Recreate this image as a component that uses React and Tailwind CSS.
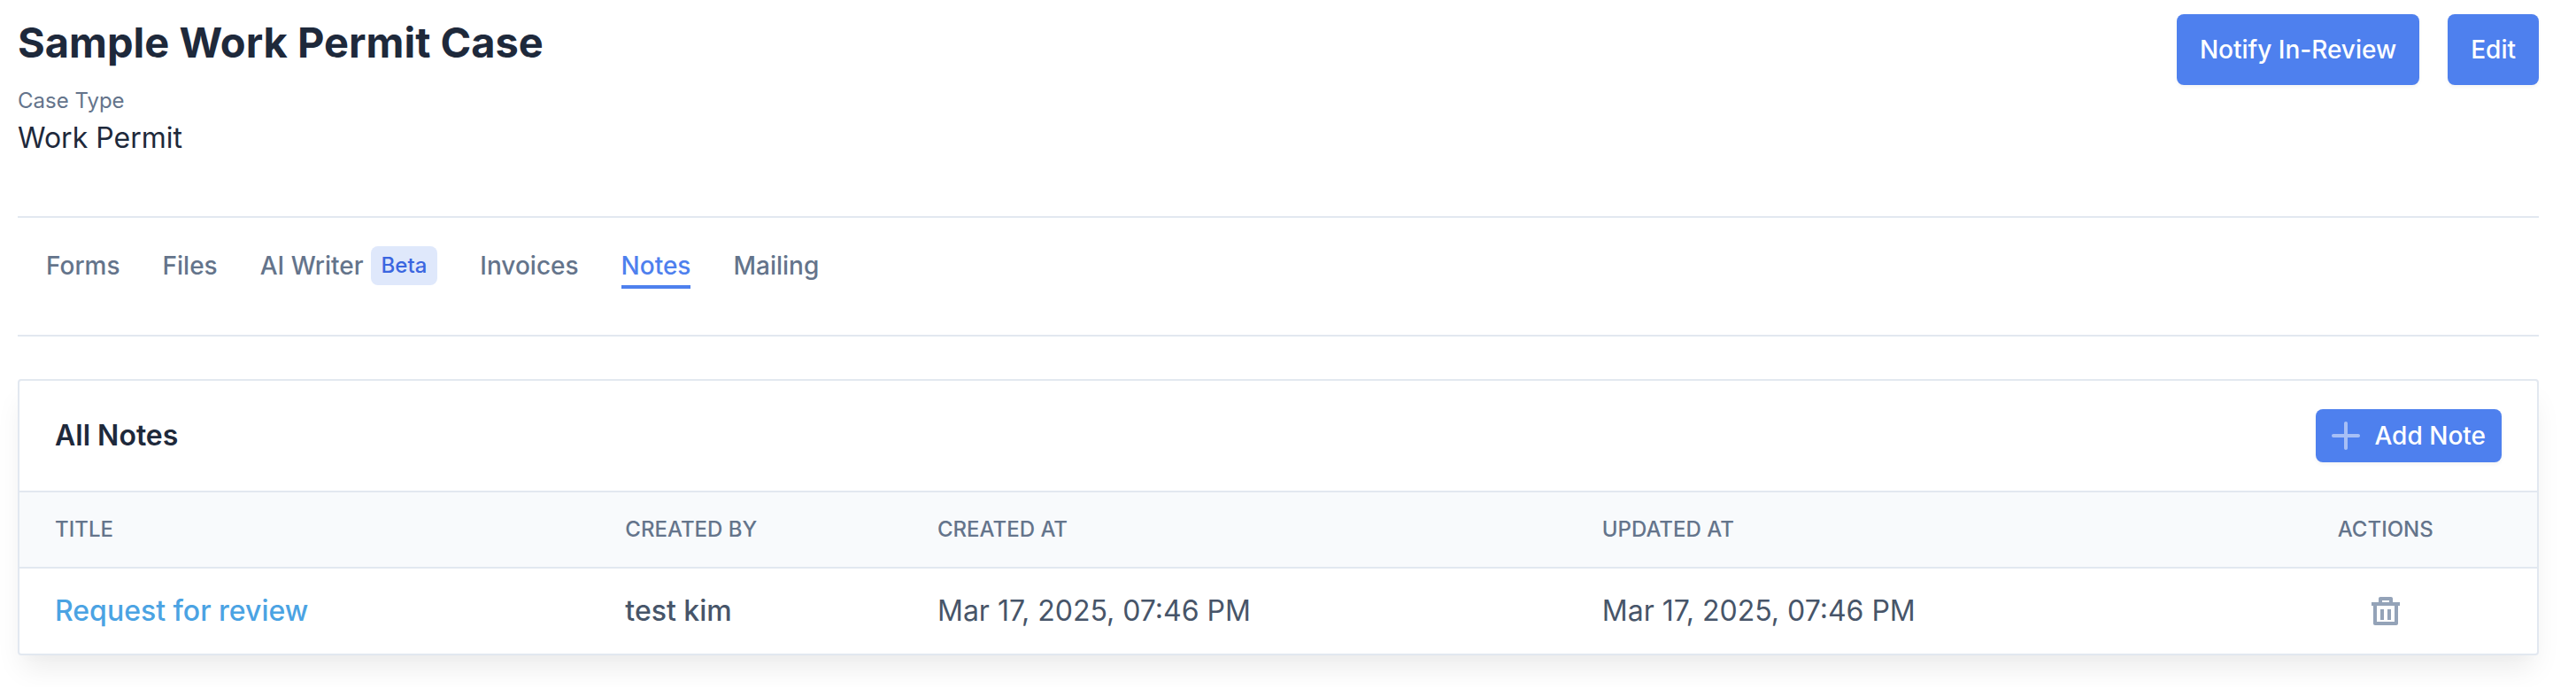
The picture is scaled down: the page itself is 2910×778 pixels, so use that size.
import React from 'react';
import clsx from 'clsx';

const tabs = [
  { label: 'Forms' },
  { label: 'Files' },
  { label: 'AI Writer', badge: 'Beta' },
  { label: 'Invoices' },
  { label: 'Notes', active: true },
  { label: 'Mailing' },
];

const columns = [
  { label: 'Title', width: 'w-[23.5%]' },
  { label: 'Created By', width: 'w-[12.4%]' },
  { label: 'Created At', width: 'w-[26.4%]' },
  { label: 'Updated At', width: 'w-[26.5%]' },
  { label: 'Actions', width: 'w-[11.2%]' },
];

const notes = [
  {
    id: 1,
    title: 'Request for review',
    createdBy: 'test kim',
    createdAt: 'Mar 17, 2025, 07:46 PM',
    updatedAt: 'Mar 17, 2025, 07:46 PM',
  },
];

function Button({ className, children }) {
  return (
    <button
      type="button"
      className={clsx(
        'flex items-center rounded-lg bg-[#4e80ee] text-[28px] leading-[44px] font-medium text-white shadow-[0_2px_4px_rgba(0,0,0,0.05)]',
        className
      )}
    >
      {children}
    </button>
  );
}

function PlusIcon() {
  return (
    <svg className="size-8 shrink-0 fill-current opacity-50" viewBox="0 0 16 16" aria-hidden="true">
      <path d="M15 7H9V1c0-.6-.4-1-1-1S7 .4 7 1v6H1c-.6 0-1 .4-1 1s.4 1 1 1h6v6c0 .6.4 1 1 1s1-.4 1-1V9h6c.6 0 1-.4 1-1s-.4-1-1-1z" />
    </svg>
  );
}

function TrashIcon() {
  return (
    <svg className="size-8 fill-current" viewBox="0 0 16 16" aria-hidden="true">
      <path d="M5 7h2v6H5V7zm4 0h2v6H9V7zm3-6v2h4v2h-1v10c0 .6-.4 1-1 1H2c-.6 0-1-.4-1-1V5H0V3h4V1c0-.6.4-1 1-1h6c.6 0 1 .4 1 1zM6 2v1h4V2H6zm7 3H3v9h10V5z" />
    </svg>
  );
}

function CaseHeader() {
  return (
    <header className="flex items-start justify-between">
      <div>
        <h1 className="text-[47px] leading-[64px] font-bold text-[#1e293b]">Sample Work Permit Case</h1>
        <dl className="mt-4">
          <dt className="text-2xl leading-9 text-[#64748b]">Case Type</dt>
          <dd className="text-[32px] leading-[48px] text-[#1e293b]">Work Permit</dd>
        </dl>
      </div>
      <div className="flex gap-8">
        <Button className="px-[26px] py-[18px]">Notify In-Review</Button>
        <Button className="px-[26px] py-[18px]">Edit</Button>
      </div>
    </header>
  );
}

function Tabs() {
  return (
    <nav className="mt-16 border-y-2 border-[#e2e8f0] px-8 pt-8 pb-[52px]">
      <ul className="flex items-start gap-12">
        {tabs.map((tab) => (
          <li key={tab.label}>
            <a
              href="#"
              className={clsx(
                'flex items-center gap-2 text-[28px] leading-[44px] font-medium',
                tab.active ? 'border-b-4 border-[#4e80ee] text-[#4e80ee]' : 'text-[#64748b]'
              )}
            >
              {tab.label}
              {tab.badge && (
                <span className="rounded-lg bg-[#dfe8fb] px-3 text-2xl leading-[44px] text-[#3b66e0]">{tab.badge}</span>
              )}
            </a>
          </li>
        ))}
      </ul>
    </nav>
  );
}

function NotesTable() {
  return (
    <table className="w-full table-fixed">
      <thead className="border-y-2 border-[#e2e8f0] bg-[#f8fafc] text-2xl leading-9 text-[#64748b] uppercase">
        <tr>
          {columns.map((col) => (
            <th
              key={col.label}
              scope="col"
              className={clsx(
                'px-4 py-6 text-left font-medium first:pl-10 last:pr-10 last:text-center',
                col.width
              )}
            >
              {col.label}
            </th>
          ))}
        </tr>
      </thead>
      <tbody className="text-[32px] leading-[48px] text-[#475569]">
        {notes.map((note) => (
          <tr key={note.id}>
            <td className="py-6 pr-4 pl-10 font-medium">
              <a href="#" className="text-[#4ba3e3]">
                {note.title}
              </a>
            </td>
            <td className="px-4 py-6 font-medium">{note.createdBy}</td>
            <td className="px-4 py-6">{note.createdAt}</td>
            <td className="px-4 py-6">{note.updatedAt}</td>
            <td className="py-6 pr-10 pl-4">
              <button type="button" aria-label="Delete note" className="mx-auto block text-[#94a3b8]">
                <TrashIcon />
              </button>
            </td>
          </tr>
        ))}
      </tbody>
    </table>
  );
}

export default function App() {
  return (
    <main className="bg-white pt-4 pr-[42px] pb-9 pl-5 font-['Inter',sans-serif]">
      <CaseHeader />
      <Tabs />
      <section className="mt-12 rounded-sm border-2 border-[#e2e8f0] bg-white shadow-[0_20px_30px_-6px_rgba(0,0,0,0.08),0_8px_12px_-4px_rgba(0,0,0,0.01)]">
        <div className="flex items-center justify-between px-10 py-8">
          <h2 className="text-[32px] leading-[48px] font-semibold text-[#1e293b]">All Notes</h2>
          <Button className="gap-4 px-[18px] py-2">
            <PlusIcon />
            Add Note
          </Button>
        </div>
        <NotesTable />
      </section>
    </main>
  );
}
